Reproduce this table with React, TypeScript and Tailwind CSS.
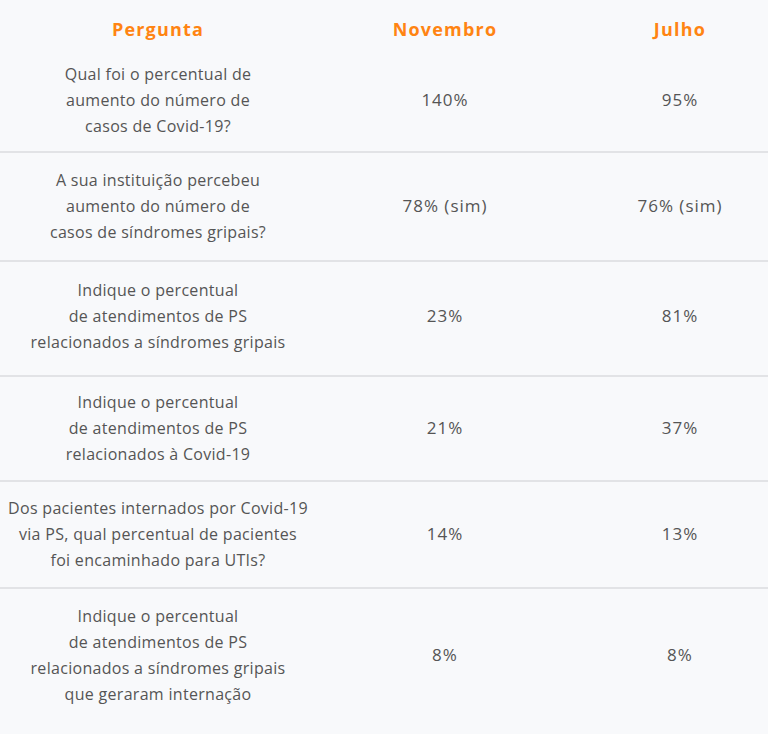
const rows = [
  {
    q: ["Qual foi o percentual de", "aumento do número de", "casos de Covid-19?"],
    nov: "140%",
    jul: "95%",
    h: "h-[101px] pb-[4px]",
  },
  {
    q: ["A sua instituição percebeu", "aumento do número de", "casos de síndromes gripais?"],
    nov: "78% (sim)",
    jul: "76% (sim)",
    h: "h-[109px] pb-[2px]",
  },
  {
    q: ["Indique o percentual", "de atendimentos de PS", "relacionados a síndromes gripais"],
    nov: "23%",
    jul: "81%",
    h: "h-[115px] pb-[6px]",
  },
  {
    q: ["Indique o percentual", "de atendimentos de PS", "relacionados à Covid-19"],
    nov: "21%",
    jul: "37%",
    h: "h-[105px] pb-[2px]",
  },
  {
    q: ["Dos pacientes internados por Covid-19", "via PS, qual percentual de pacientes", "foi encaminhado para UTIs?"],
    nov: "14%",
    jul: "13%",
    h: "h-[107px] pb-[2px]",
  },
  {
    q: [
      "Indique o percentual",
      "de atendimentos de PS",
      "relacionados a síndromes gripais",
      "que geraram internação",
    ],
    nov: "8%",
    jul: "8%",
    h: "h-[132px] pb-[1px]",
  },
];

const App = () => {
  return (
    <div
      className="min-h-screen bg-[#f8f9fb] text-[#555555] overflow-hidden"
      style={{ fontFamily: '"Open Sans", "DejaVu Sans", sans-serif' }}
    >
      {/* Header */}
      <div className="grid grid-cols-[316px_258px_1fr] h-[52px] items-center text-[18px] font-bold text-[#ff8412] tracking-[1.2px]">
        <div className="text-center pt-[6px]">Pergunta</div>
        <div className="text-center pt-[6px]">Novembro</div>
        <div className="text-center pt-[6px] pl-[18px]">Julho</div>
      </div>

      {/* Body */}
      {rows.map((row, i) => (
        <div
          key={i}
          className={`grid grid-cols-[316px_258px_1fr] items-center ${row.h} ${
            i < rows.length - 1 ? "border-b-2 border-[#e2e3e6]" : ""
          }`}
        >
          <div className="text-center text-[16px] leading-[26px] tracking-[0.3px]">
            {row.q.map((line) => (
              <div key={line}>{line}</div>
            ))}
          </div>
          <div className="text-center text-[17px] tracking-[1px]">{row.nov}</div>
          <div className="text-center text-[17px] tracking-[1px] pl-[18px]">{row.jul}</div>
        </div>
      ))}
    </div>
  );
};

export default App;
